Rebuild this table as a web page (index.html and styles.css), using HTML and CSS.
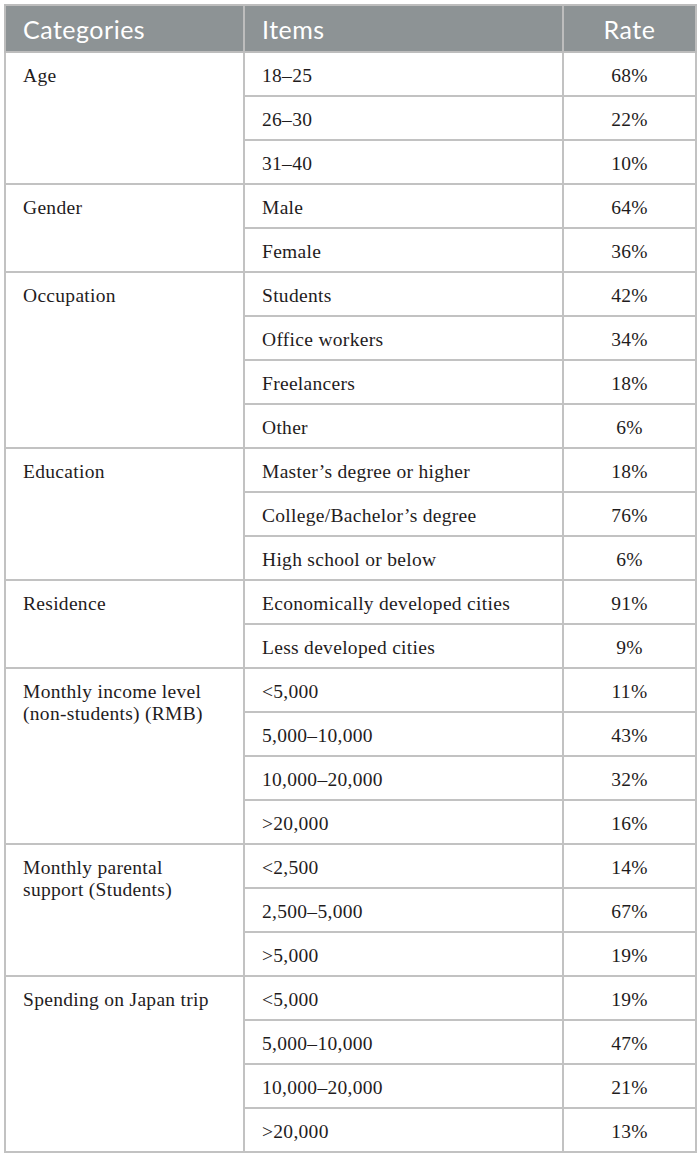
FILE: index.html
```html
<!DOCTYPE html>
<html>
<head>
<meta charset="utf-8">
<link rel="stylesheet" href="styles.css">
</head>
<body>
<table class="data">
  <colgroup><col class="c1"><col class="c2"><col class="c3"></colgroup>
  <thead>
    <tr><th class="left">Categories</th><th class="left">Items</th><th class="rate">Rate</th></tr>
  </thead>
  <tbody>
    <tr><td class="cat" rowspan="3">Age</td><td>18–25</td><td class="rate">68%</td></tr>
    <tr><td>26–30</td><td class="rate">22%</td></tr>
    <tr><td>31–40</td><td class="rate">10%</td></tr>
    <tr><td class="cat" rowspan="2">Gender</td><td>Male</td><td class="rate">64%</td></tr>
    <tr><td>Female</td><td class="rate">36%</td></tr>
    <tr><td class="cat" rowspan="4">Occupation</td><td>Students</td><td class="rate">42%</td></tr>
    <tr><td>Office workers</td><td class="rate">34%</td></tr>
    <tr><td>Freelancers</td><td class="rate">18%</td></tr>
    <tr><td>Other</td><td class="rate">6%</td></tr>
    <tr><td class="cat" rowspan="3">Education</td><td>Master’s degree or higher</td><td class="rate">18%</td></tr>
    <tr><td>College/Bachelor’s degree</td><td class="rate">76%</td></tr>
    <tr><td>High school or below</td><td class="rate">6%</td></tr>
    <tr><td class="cat" rowspan="2">Residence</td><td>Economically developed cities</td><td class="rate">91%</td></tr>
    <tr><td>Less developed cities</td><td class="rate">9%</td></tr>
    <tr><td class="cat" rowspan="4">Monthly income level<br>(non-students) (RMB)</td><td>&lt;5,000</td><td class="rate">11%</td></tr>
    <tr><td>5,000–10,000</td><td class="rate">43%</td></tr>
    <tr><td>10,000–20,000</td><td class="rate">32%</td></tr>
    <tr><td>&gt;20,000</td><td class="rate">16%</td></tr>
    <tr><td class="cat" rowspan="3">Monthly parental<br>support (Students)</td><td>&lt;2,500</td><td class="rate">14%</td></tr>
    <tr><td>2,500–5,000</td><td class="rate">67%</td></tr>
    <tr><td>&gt;5,000</td><td class="rate">19%</td></tr>
    <tr><td class="cat" rowspan="4">Spending on Japan trip</td><td>&lt;5,000</td><td class="rate">19%</td></tr>
    <tr><td>5,000–10,000</td><td class="rate">47%</td></tr>
    <tr><td>10,000–20,000</td><td class="rate">21%</td></tr>
    <tr><td>&gt;20,000</td><td class="rate">13%</td></tr>
  </tbody>
</table>
</body>
</html>
```
FILE: styles.css
```css
html, body { margin: 0; padding: 0; background: #fff; }
body { padding: 4px 0 0 4px; }
.data {
  border-collapse: collapse;
  width: 691px;
  table-layout: fixed;
  font-family: "Liberation Serif", "Times New Roman", serif;
  font-size: 19.5px;
  letter-spacing: 0.3px;
  color: #1f1c1d;
}
.c1 { width: 239px; }
.c2 { width: 319px; }
.c3 { width: 133px; }
.data th {
  background: #8d9395;
  color: #fff;
  font-family: Lato, "Open Sans", sans-serif;
  font-weight: 400;
  font-size: 25px;
  letter-spacing: 0.5px;
  height: 47px;
  padding: 0 17px;
  border: 2px solid #bdbdbd;
  box-sizing: border-box;
  vertical-align: middle;
}
.data th.left { text-align: left; }
.data th.rate { text-align: center; padding: 0; }
.data td {
  border: 2px solid #c2c2c2;
  height: 44px;
  box-sizing: border-box;
  padding: 4px 17px 0 17px;
  line-height: 22px;
  vertical-align: middle;
}
.data td.cat { vertical-align: top; padding-top: 12px; }
.data td.rate { text-align: center; padding: 4px 0 0 0; }
```
